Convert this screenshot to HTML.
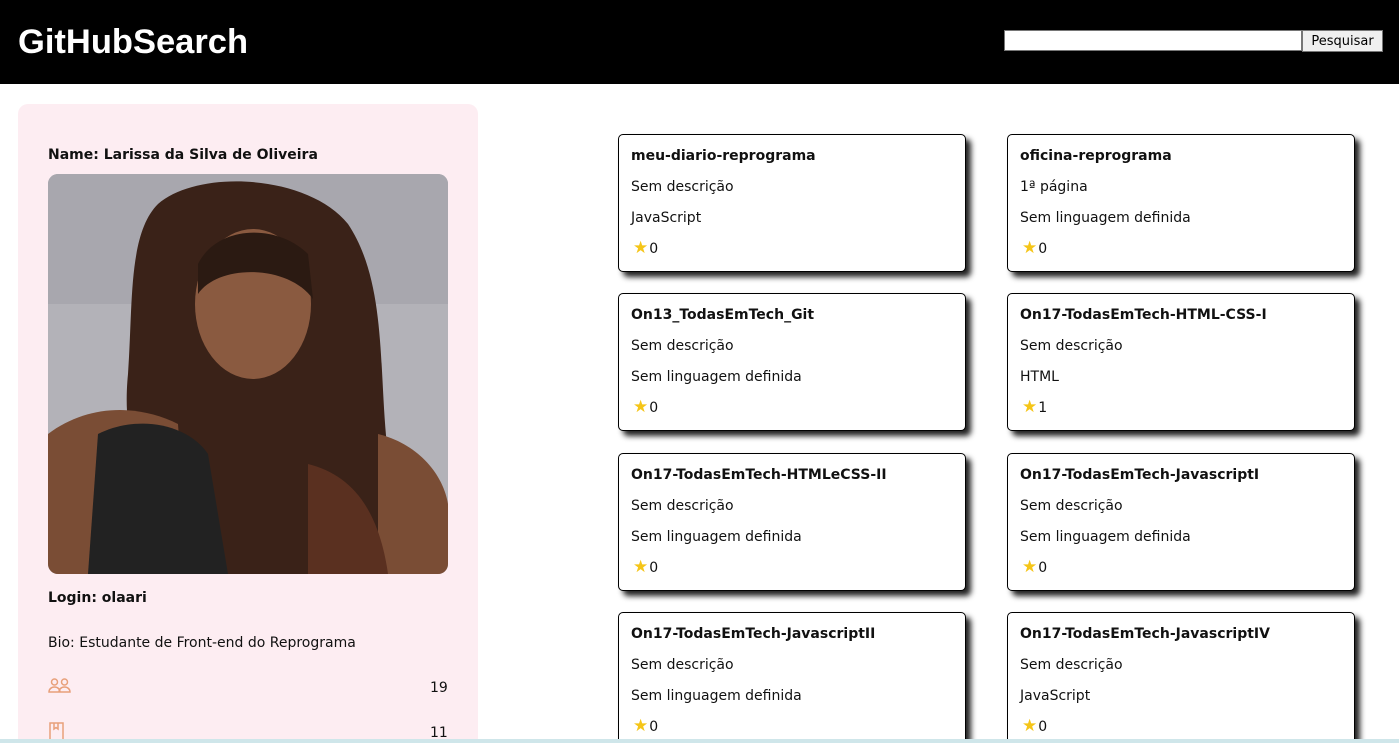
<!DOCTYPE html>
<html style="width:1399px;height:743px;overflow:hidden"><head><meta charset="utf-8"><style>
*{box-sizing:border-box;margin:0;padding:0}
body{width:1399px;height:743px;overflow:hidden;background:#fff;font-family:"DejaVu Sans",Verdana,sans-serif;font-size:14px;color:#111;position:relative}
header{position:absolute;left:0;top:0;width:1399px;height:84px;background:#000}
header h1{position:absolute;left:18px;top:23px;color:#fff;font-family:"Liberation Sans",Arial,sans-serif;font-weight:bold;font-size:34.5px}
.search{position:absolute;left:1004px;top:30px}
.search input{width:298px;height:21px;border:1px solid #767676;vertical-align:top}
.search button{position:absolute;left:298px;top:0;width:81px;height:22px;background:#efefef;border:1px solid #767676;font-family:"DejaVu Sans",sans-serif;font-size:13px;color:#000}
.prof{position:absolute;left:18px;top:104px;width:460px;height:650px;background:#fdedf2;border-radius:10px}
.prof .t{position:absolute;left:30px;font-size:14px}
.photo{position:absolute;left:30px;top:70px;width:400px;height:400px;border-radius:10px;overflow:hidden;background:#b4b3b8}
.card{position:absolute;width:348px;height:138px;border:1px solid #000;border-radius:5px;background:#fff;box-shadow:5px 5px 6px #222}
.card div{position:absolute;left:12px}
.card .n{top:13px;font-weight:bold}
.card .d{top:44px}.card .l{top:75px}.card .s{top:106px;left:14px}
.star{color:#f5c518;font-size:17px;line-height:14px;margin-right:1px}
.bar{position:absolute;left:0;top:739px;width:1399px;height:4px;background:#cfe6ea}
</style></head><body>
<header><h1>GitHubSearch</h1><div class="search"><input><button>Pesquisar</button></div></header>
<div class="prof">
<div class="t" style="top:43px;font-weight:bold">Name: Larissa da Silva de Oliveira</div>
<div class="photo">
<svg width="400" height="400">
<rect width="400" height="400" fill="#b3b2b8"/>
<rect x="0" y="0" width="400" height="130" fill="#a8a7ae"/>
<path d="M110 30 C150 -5 260 0 300 50 C340 110 330 200 340 280 C350 340 330 400 320 400 L140 400 C120 340 70 300 80 200 C85 130 80 60 110 30Z" fill="#3a2218"/>
<ellipse cx="205" cy="130" rx="58" ry="75" fill="#8a5a40"/>
<path d="M150 120 C170 90 240 90 265 125 L260 80 C230 50 170 50 150 90Z" fill="#2b1a12"/>
<path d="M0 260 C40 230 90 230 130 250 L140 400 L0 400Z" fill="#7a4d35"/>
<path d="M330 260 C370 270 395 300 400 330 L400 400 L330 400Z" fill="#7a4d35"/>
<path d="M50 260 C90 240 140 250 160 280 L180 400 L40 400Z" fill="#222"/>
<path d="M260 290 C300 300 330 330 340 400 L260 400Z" fill="#5a3020"/>
</svg></div>
<div class="t" style="top:486px;font-weight:bold">Login: olaari</div>
<div class="t" style="top:531px">Bio: Estudante de Front-end do Reprograma</div>
<svg style="position:absolute;left:30px;top:574px" width="24" height="16" viewBox="0 0 24 16" fill="none" stroke="#e8a07a" stroke-width="1.5"><circle cx="6.5" cy="4" r="3"/><circle cx="16.5" cy="4" r="3"/><path d="M1 14c0-3 2.5-5 5.5-5s5.5 2 5.5 5zM11 14c0-3 2.5-5 5.5-5s5.5 2 5.5 5z"/></svg>
<div class="t" style="top:576px;left:412px">19</div>
<svg style="position:absolute;left:31px;top:618px" width="15" height="20" viewBox="0 0 15 20" fill="none" stroke="#e8a07a" stroke-width="1.5"><rect x="1" y="1" width="13" height="18"/><path d="M5 1v6l2-1.5 2 1.5V1"/></svg>
<div class="t" style="top:621px;left:412px">11</div>
</div>
<div class="card" style="left:618px;top:134px"><div class="n">meu-diario-reprograma</div><div class="d">Sem descrição</div><div class="l">JavaScript</div><div class="s"><span class="star">★</span>0</div></div>
<div class="card" style="left:1007px;top:134px"><div class="n">oficina-reprograma</div><div class="d">1ª página</div><div class="l">Sem linguagem definida</div><div class="s"><span class="star">★</span>0</div></div>
<div class="card" style="left:618px;top:293px"><div class="n">On13_TodasEmTech_Git</div><div class="d">Sem descrição</div><div class="l">Sem linguagem definida</div><div class="s"><span class="star">★</span>0</div></div>
<div class="card" style="left:1007px;top:293px"><div class="n">On17-TodasEmTech-HTML-CSS-I</div><div class="d">Sem descrição</div><div class="l">HTML</div><div class="s"><span class="star">★</span>1</div></div>
<div class="card" style="left:618px;top:453px"><div class="n">On17-TodasEmTech-HTMLeCSS-II</div><div class="d">Sem descrição</div><div class="l">Sem linguagem definida</div><div class="s"><span class="star">★</span>0</div></div>
<div class="card" style="left:1007px;top:453px"><div class="n">On17-TodasEmTech-JavascriptI</div><div class="d">Sem descrição</div><div class="l">Sem linguagem definida</div><div class="s"><span class="star">★</span>0</div></div>
<div class="card" style="left:618px;top:612px"><div class="n">On17-TodasEmTech-JavascriptII</div><div class="d">Sem descrição</div><div class="l">Sem linguagem definida</div><div class="s"><span class="star">★</span>0</div></div>
<div class="card" style="left:1007px;top:612px"><div class="n">On17-TodasEmTech-JavascriptIV</div><div class="d">Sem descrição</div><div class="l">JavaScript</div><div class="s"><span class="star">★</span>0</div></div>
<div class="bar"></div>
</body></html>
